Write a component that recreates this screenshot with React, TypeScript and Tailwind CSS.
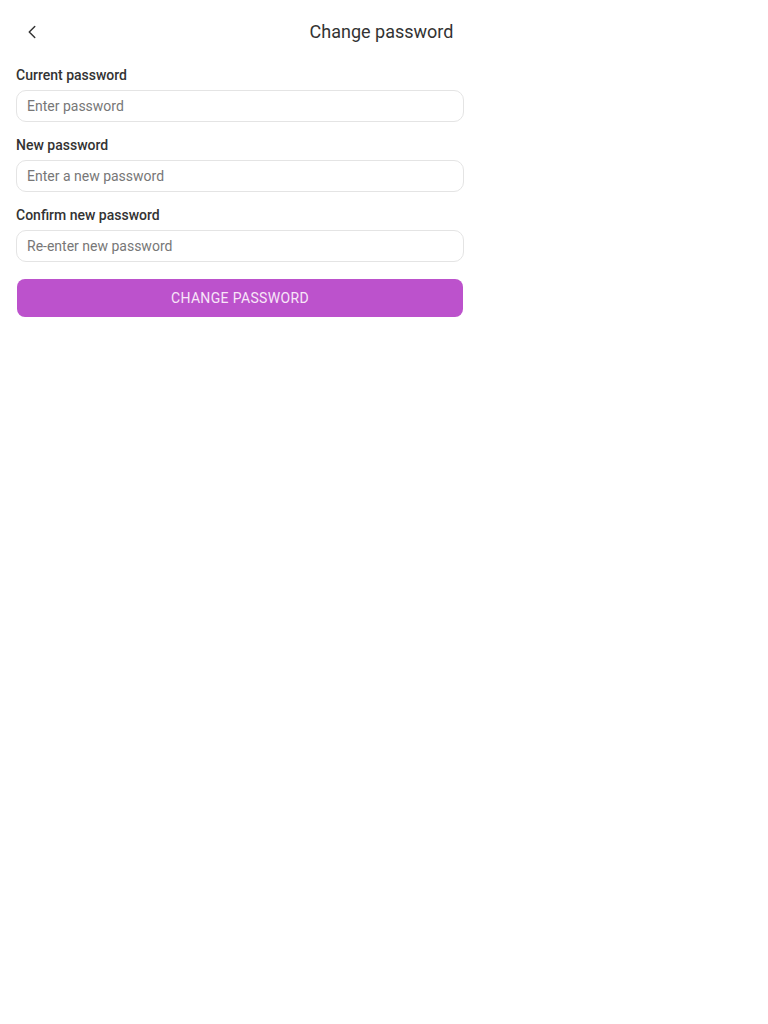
import React from 'react';
import { ChevronLeft } from 'lucide-react';

const fields = [
  { label: 'Current password', placeholder: 'Enter password' },
  { label: 'New password', placeholder: 'Enter a new password' },
  { label: 'Confirm new password', placeholder: 'Re-enter new password' },
];

export default function App() {
  return (
    <div className="min-h-screen bg-white font-['Roboto',sans-serif] text-[#333]">
      <header className="relative flex h-16 items-center justify-center pr-[5px]">
        <button className="absolute left-[21px] top-[21px] flex h-[22px] w-[22px] items-center justify-center text-[#333]">
          <ChevronLeft size={22} strokeWidth={1.6} />
        </button>
        <h1 className="text-lg text-[#333]">Change password</h1>
      </header>

      <form className="flex w-[480px] flex-col px-4 pt-px" onSubmit={(e) => e.preventDefault()}>
        {fields.map((f) => (
          <div key={f.label} className="mb-[13px] flex flex-col">
            <label className="mb-[5px] text-sm leading-5 font-medium text-[#333]">{f.label}</label>
            <input
              type="password"
              placeholder={f.placeholder}
              className="h-8 w-full rounded-[10px] border border-[#e4e4e4] px-[10px] text-sm outline-none placeholder:text-[#777]"
            />
          </div>
        ))}
        <button
          type="submit"
          className="mx-px mt-[4px] h-[38px] rounded-lg bg-[#bc52cc] text-sm tracking-[0.35px] text-[#f8e6f8] uppercase"
        >
          Change password
        </button>
      </form>
    </div>
  );
}
